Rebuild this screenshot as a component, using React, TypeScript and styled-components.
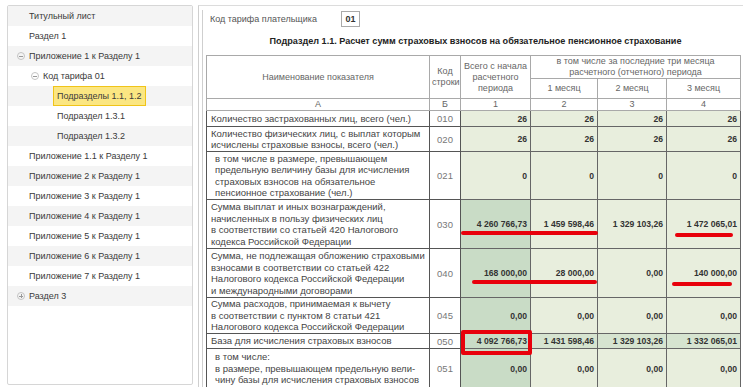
import { FC } from "react";
import styled, { createGlobalStyle } from "styled-components";

const GlobalStyle = createGlobalStyle`
  html, body {
    margin: 0;
    padding: 0;
    background: #fff;
  }
  body {
    font-family: "Liberation Sans", Arial, sans-serif;
    color: #333;
  }
`;

const Page = styled.div`
  position: relative;
  display: flex;
  width: 743px;
  height: 390px;
  box-sizing: border-box;
  padding: 5px 0 0 7px;
  overflow: hidden;
`;

const Sidebar = styled.div`
  width: 186px;
  height: 380px;
  box-sizing: border-box;
  border: 1px solid #d6d6d6;
  border-radius: 2px;
  flex-shrink: 0;
`;

const TreeRow = styled.div<{ $level: number; $odd: boolean }>`
  height: 20px;
  display: flex;
  align-items: center;
  padding-left: ${(p) => 9 + p.$level * 14}px;
  background: ${(p) => (p.$odd ? "#f4f4f4" : "#fff")};
  font-size: 9px;
  color: #3a3a3a;
  white-space: nowrap;
`;

const Toggle = styled.span<{ $open: boolean }>`
  position: relative;
  width: 6px;
  height: 6px;
  border: 1px solid #c4c4c4;
  border-radius: 50%;
  margin-right: 4px;
  flex-shrink: 0;
  &::after {
    content: "";
    position: absolute;
    left: 1px;
    top: 2.5px;
    width: 4px;
    height: 1px;
    background: #999;
  }
  &::before {
    content: "";
    display: ${(p) => (p.$open ? "none" : "block")};
    position: absolute;
    left: 2.5px;
    top: 1px;
    width: 1px;
    height: 4px;
    background: #999;
  }
`;

const Spacer = styled.span`
  width: 12px;
  flex-shrink: 0;
`;

const Label = styled.span<{ $selected?: boolean }>`
  padding: ${(p) => (p.$selected ? "4px 3px" : "0")};
  margin-left: ${(p) => (p.$selected ? "-4px" : "0")};
  background: ${(p) => (p.$selected ? "#fbe682" : "transparent")};
  border: ${(p) => (p.$selected ? "1px solid #f0c419" : "none")};
`;

const Main = styled.div`
  margin-left: 5px;
  flex: 1;
  height: 381px;
  border-top: 1px solid #dcdcdc;
  border-left: 1px solid #cfcfcf;
  padding-left: 3px;
  overflow: hidden;
`;

const Inner = styled.div`
  height: 100%;
  border-left: 1px solid #cfcfcf;
  padding-left: 3px;
`;

const TariffRow = styled.div`
  display: flex;
  align-items: center;
  height: 17px;
  margin-top: 4px;
  padding-left: 4px;
  font-size: 9px;
  color: #555;
`;

const TariffBox = styled.span`
  margin-left: 24px;
  width: 19px;
  height: 16px;
  box-sizing: border-box;
  border: 1px solid #aaa;
  display: flex;
  align-items: center;
  justify-content: center;
  font-weight: bold;
  color: #333;
`;

const Title = styled.div`
  height: 28px;
  display: flex;
  align-items: center;
  justify-content: center;
  font-size: 9.1px;
  font-weight: bold;
  color: #222;
  padding-left: 2px;
`;

const Table = styled.table`
  border-collapse: collapse;
  table-layout: fixed;
  width: 534px;
  font-size: 9.5px;
`;

const HeadCell = styled.th`
  font-weight: normal;
  font-size: 9px;
  color: #666;
  border: 1px solid #a9a9a9;
  text-align: center;
  padding: 0 2px;
  line-height: 11px;
`;

const NameCell = styled.td<{ $indent?: boolean }>`
  border: 1px solid #555;
  padding: 0 2px 0 ${(p) => (p.$indent ? 8 : 4)}px;
  line-height: 11.5px;
  color: #444;
  background: #fff;
  vertical-align: middle;
  white-space: nowrap;
  overflow: hidden;
`;

const CodeCell = styled.td`
  border: 1px solid #555;
  text-align: center;
  color: #777;
  background: #fff;
`;

const ValueCell = styled.td<{ $tone: "light" | "mid" | "dark" }>`
  border: 1px solid #666;
  text-align: right;
  font-size: 8.6px;
  font-weight: bold;
  color: #333;
  padding: 0 3px 0 0;
  white-space: nowrap;
  background: ${(p) =>
    p.$tone === "dark" ? "#c9dcc6" : p.$tone === "mid" ? "#d6e4d0" : "#e8eedd"};
`;

const Mark = styled.div<{ $x: number; $y: number; $w: number; $h: number }>`
  position: absolute;
  left: ${(p) => p.$x}px;
  top: ${(p) => p.$y}px;
  width: ${(p) => p.$w}px;
  height: ${(p) => p.$h}px;
  background: #e8000b;
  border-radius: 2px;
`;

const Frame = styled.div`
  position: absolute;
  left: 461px;
  top: 330px;
  width: 71px;
  height: 25px;
  box-sizing: border-box;
  border: 4px solid #e8000b;
  border-radius: 2px;
`;

const tree = [
  { label: "Титульный лист", level: 0 },
  { label: "Раздел 1", level: 0 },
  { label: "Приложение 1 к Разделу 1", level: 0, toggle: "open" },
  { label: "Код тарифа 01", level: 1, toggle: "open" },
  { label: "Подразделы 1.1, 1.2", level: 2, selected: true },
  { label: "Подраздел 1.3.1", level: 2 },
  { label: "Подраздел 1.3.2", level: 2 },
  { label: "Приложение 1.1 к Разделу 1", level: 0 },
  { label: "Приложение 2 к Разделу 1", level: 0 },
  { label: "Приложение 3 к Разделу 1", level: 0 },
  { label: "Приложение 4 к Разделу 1", level: 0 },
  { label: "Приложение 5 к Разделу 1", level: 0 },
  { label: "Приложение 6 к Разделу 1", level: 0 },
  { label: "Приложение 7 к Разделу 1", level: 0 },
  { label: "Раздел 3", level: 0, toggle: "closed" },
];

type Row = {
  code: string;
  height: number;
  lines: string[];
  values: string[];
  indent?: boolean;
  darkFirst?: boolean;
  mid?: boolean;
};

const rows: Row[] = [
  {
    code: "010",
    height: 16,
    lines: ["Количество застрахованных лиц, всего (чел.)"],
    values: ["26", "26", "26", "26"],
  },
  {
    code: "020",
    height: 25,
    lines: [
      "Количество физических лиц, с выплат которым",
      "исчислены страховые взносы, всего (чел.)",
    ],
    values: ["26", "26", "26", "26"],
  },
  {
    code: "021",
    height: 48,
    indent: true,
    lines: [
      "в том числе в размере, превышающем",
      "предельную величину базы для исчисления",
      "страховых взносов на обязательное",
      "пенсионное страхование (чел.)",
    ],
    values: ["0", "0", "0", "0"],
  },
  {
    code: "030",
    height: 49,
    darkFirst: true,
    lines: [
      "Сумма выплат и иных вознаграждений,",
      "начисленных в пользу физических лиц",
      "в соответствии со статьей 420 Налогового",
      "кодекса Российской Федерации",
    ],
    values: ["4 260 766,73", "1 459 598,46", "1 329 103,26", "1 472 065,01"],
  },
  {
    code: "040",
    height: 49,
    darkFirst: true,
    lines: [
      "Сумма, не подлежащая обложению страховыми",
      "взносами в соответствии со статьей 422",
      "Налогового кодекса Российской Федерации",
      "и международными договорами",
    ],
    values: ["168 000,00", "28 000,00", "0,00", "140 000,00"],
  },
  {
    code: "045",
    height: 36,
    darkFirst: true,
    lines: [
      "Сумма расходов, принимаемая к вычету",
      "в соответствии с пунктом 8 статьи 421",
      "Налогового кодекса Российской Федерации",
    ],
    values: ["0,00", "0,00", "0,00", "0,00"],
  },
  {
    code: "050",
    height: 15,
    darkFirst: true,
    mid: true,
    lines: ["База для исчисления страховых взносов"],
    values: ["4 092 766,73", "1 431 598,46", "1 329 103,26", "1 332 065,01"],
  },
  {
    code: "051",
    height: 40,
    darkFirst: true,
    indent: true,
    lines: [
      "в том числе:",
      "в размере, превышающем предельную вели-",
      "чину базы для исчисления страховых взносов",
    ],
    values: ["0,00", "0,00", "0,00", "0,00"],
  },
];

const TreeMenu: FC = () => (
  <Sidebar>
    {tree.map((item, i) => (
      <TreeRow key={item.label} $level={item.level} $odd={i % 2 === 0}>
        {item.toggle ? <Toggle $open={item.toggle === "open"} /> : <Spacer />}
        <Label $selected={item.selected}>{item.label}</Label>
      </TreeRow>
    ))}
  </Sidebar>
);

const App: FC = () => {
  return (
    <>
      <GlobalStyle />
      <Page>
        <TreeMenu />
        <Main>
          <Inner>
            <TariffRow>
              Код тарифа плательщика
              <TariffBox>01</TariffBox>
            </TariffRow>
            <Title>
              Подраздел 1.1. Расчет сумм страховых взносов на обязательное
              пенсионное страхование
            </Title>
            <Table>
              <colgroup>
                <col style={{ width: 223 }} />
                <col style={{ width: 31 }} />
                <col style={{ width: 70 }} />
                <col style={{ width: 67 }} />
                <col style={{ width: 69 }} />
                <col style={{ width: 74 }} />
              </colgroup>
              <thead>
                <tr style={{ height: 22 }}>
                  <HeadCell rowSpan={2}>Наименование показателя</HeadCell>
                  <HeadCell rowSpan={2}>
                    Код
                    <br />
                    строки
                  </HeadCell>
                  <HeadCell rowSpan={2}>
                    Всего с начала
                    <br />
                    расчетного
                    <br />
                    периода
                  </HeadCell>
                  <HeadCell colSpan={3}>
                    в том числе за последние три месяца
                    <br />
                    расчетного (отчетного) периода
                  </HeadCell>
                </tr>
                <tr style={{ height: 20 }}>
                  <HeadCell>1 месяц</HeadCell>
                  <HeadCell>2 месяц</HeadCell>
                  <HeadCell>3 месяц</HeadCell>
                </tr>
                <tr style={{ height: 12 }}>
                  {["А", "Б", "1", "2", "3", "4"].map((h) => (
                    <HeadCell key={h}>{h}</HeadCell>
                  ))}
                </tr>
              </thead>
              <tbody>
                {rows.map((row) => (
                  <tr key={row.code} style={{ height: row.height }}>
                    <NameCell $indent={row.indent}>
                      {row.lines.map((line, i) => (
                        <span key={i}>
                          {i > 0 && <br />}
                          {line}
                        </span>
                      ))}
                    </NameCell>
                    <CodeCell>{row.code}</CodeCell>
                    {row.values.map((v, i) => (
                      <ValueCell
                        key={i}
                        $tone={
                          i === 0 && row.darkFirst
                            ? "dark"
                            : row.mid
                            ? "mid"
                            : "light"
                        }
                      >
                        {v}
                      </ValueCell>
                    ))}
                  </tr>
                ))}
              </tbody>
            </Table>
          </Inner>
        </Main>
        <Mark $x={461} $y={231} $w={137} $h={4} />
        <Mark $x={675} $y={233} $w={58} $h={4} />
        <Mark $x={472} $y={280} $w={125} $h={4} />
        <Mark $x={672} $y={282} $w={60} $h={4} />
        <Frame />
      </Page>
    </>
  );
};

export default App;
